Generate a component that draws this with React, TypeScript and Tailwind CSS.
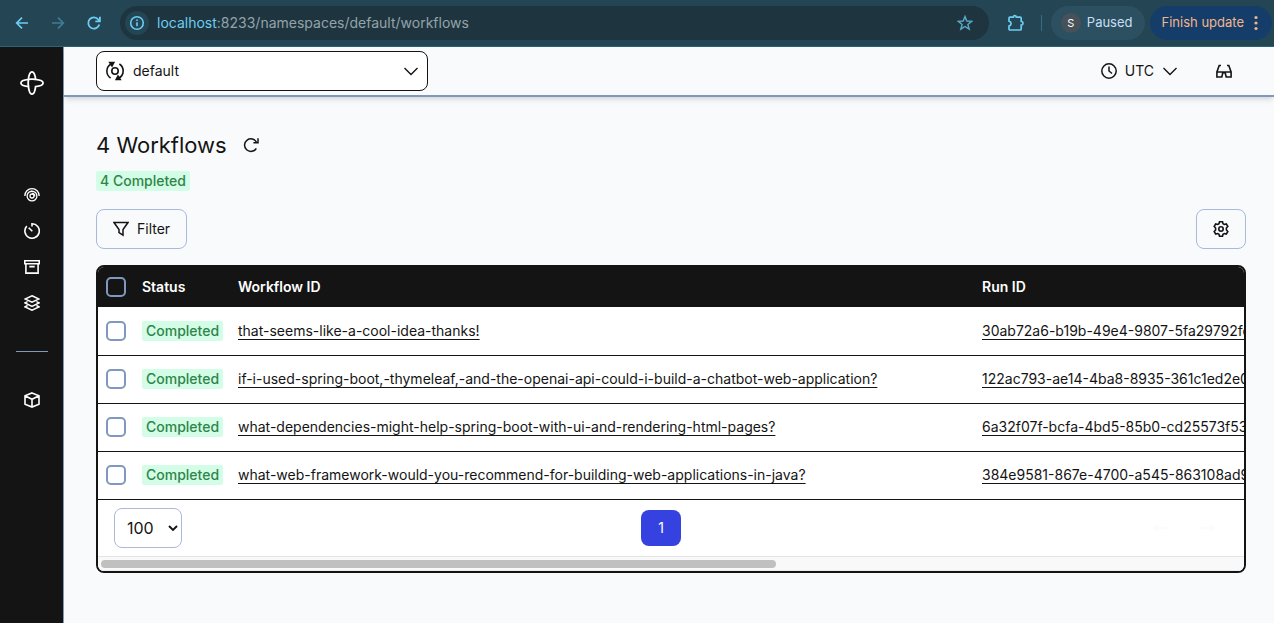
import type { ReactNode } from "react";

const workflows = [
  { id: "that-seems-like-a-cool-idea-thanks!", run: "30ab72a6-b19b-49e4-9807-5fa29792fc41" },
  {
    id: "if-i-used-spring-boot,-thymeleaf,-and-the-openai-api-could-i-build-a-chatbot-web-application?",
    run: "122ac793-ae14-4ba8-8935-361c1ed2e07b",
  },
  {
    id: "what-dependencies-might-help-spring-boot-with-ui-and-rendering-html-pages?",
    run: "6a32f07f-bcfa-4bd5-85b0-cd25573f53a2",
  },
  {
    id: "what-web-framework-would-you-recommend-for-building-web-applications-in-java?",
    run: "384e9581-867e-4700-a545-863108ad9e16",
  },
];

type IconProps = { className?: string; box?: string; width?: number; children: ReactNode };

function Icon({ className = "size-4", box = "0 0 16 16", width = 1.3, children }: IconProps) {
  return (
    <svg className={className} viewBox={box} fill="none" stroke="currentColor" strokeWidth={width} aria-hidden="true">
      {children}
    </svg>
  );
}

function ChevronDown() {
  return (
    <Icon className="size-4" width={1.4}>
      <path d="M1.500 5 8 11.500 14.500 5" />
    </Icon>
  );
}

function BrowserBar() {
  return (
    <div className="flex h-[47px] shrink-0 items-center border-b border-[#2f6273] bg-[#234554] pr-[2px] pl-[14px] text-[#6ccdf2]">
      <div className="flex items-center gap-5">
        <button aria-label="Back">
          <Icon width={1.7}>
            <path d="M14 8H3M8 2.700 2.700 8 8 13.300" />
          </Icon>
        </button>
        <button aria-label="Forward" className="text-[#417c93]">
          <Icon width={1.7}>
            <path d="M2 8h11M8 2.700 13.300 8 8 13.300" />
          </Icon>
        </button>
        <button aria-label="Reload">
          <Icon width={1.8}>
            <path d="M13.300 9.400A5.600 5.600 0 1 1 12.300 4.500L13.600 6M13.900 1.700V6.300H9.300" />
          </Icon>
        </button>
      </div>
      <div className="ml-[18px] flex h-[34px] flex-1 items-center rounded-full bg-[#1e353f] pr-4 pl-[5px]">
        <button aria-label="Site information" className="flex size-6 items-center justify-center rounded-full bg-[#234554]">
          <Icon width={1.6}>
            <circle cx="8" cy="8" r="6.300" />
            <path d="M8 7.200v4M8 4.500v1.500" />
          </Icon>
        </button>
        <div className="ml-2 flex-1 text-sm text-[#94a3aa]">
          <span className="text-[#6ccdf2]">localhost</span>:8233/namespaces/default/workflows
        </div>
        <button aria-label="Bookmark this page" className="text-[#5aa9c9]">
          <Icon width={1.4}>
            <path d="m8 1.500 1.800 4.500 4.900.3-3.800 3.100 1.300 4.800L8 11.500l-4.200 2.700 1.300-4.800L1.300 6.300l4.900-.3Z" />
          </Icon>
        </button>
      </div>
      <button aria-label="Extensions" className="ml-[18px]">
        <Icon className="size-[18px]" box="0 0 18 18" width={1.7}>
          <path d="M3 3.200H6.300C6.500 1.200 9.100 1.200 9.300 3.200H13.200Q14.200 3.200 14.200 4.200V7.400C16.600 7.600 16.600 10.800 14.200 11V15Q14.200 16 13.200 16H3Q2 16 2 15V12C4.800 11.200 4.800 7.900 2 7.100V4.200Q2 3.200 3 3.200Z" />
        </Icon>
      </button>
      <div className="ml-4 h-4 w-px bg-[#3a6c7e]" />
      <button className="ml-[9px] flex h-[34px] items-center gap-[6px] rounded-full bg-[#2c505f] pr-3 pl-[10px] text-[13px] text-[#c8def8]">
        <span className="flex size-5 items-center justify-center rounded-full bg-[#46515a] text-[11px] text-white">S</span>
        Paused
      </button>
      <button className="ml-[5px] flex h-[34px] items-center gap-[6px] rounded-full bg-[#143d69] pr-3 pl-3 text-[13px] text-[#f3b58c]">
        Finish update
        <svg className="h-4 w-[10px]" viewBox="0 0 10 16" fill="currentColor" aria-hidden="true">
          <circle cx="6" cy="2.500" r="1.600" />
          <circle cx="6" cy="8" r="1.600" />
          <circle cx="6" cy="13.500" r="1.600" />
        </svg>
      </button>
    </div>
  );
}

function Sidebar() {
  return (
    <nav className="flex w-16 shrink-0 flex-col items-center border-r border-[#8098c0] bg-[#141414] pt-6 text-white">
      <a href="#" aria-label="Home">
        <Icon className="size-6" box="0 0 24 24" width={1.8}>
          <path d="M8.400 8.400C8.900 4 10.100.9 12 .9s3.100 3.100 3.600 7.500c4.400.5 7.500 1.700 7.500 3.600s-3.100 3.100-7.500 3.600c-.5 4.400-1.700 7.500-3.600 7.500s-3.100-3.100-3.600-7.500C4 15.100.9 13.900.9 12s3.100-3.100 7.500-3.600Z" />
          <path d="M8.400 8.400c2.300-.3 4.900-.3 7.200 0M8.400 8.400c-.3 2.300-.3 4.900 0 7.200" />
        </Icon>
      </a>
      <div className="mt-[92px] flex flex-col gap-5">
        <a href="#workflows" aria-label="Workflows">
          <Icon width={1.3}>
            <path d="M.8 9C.8 4.700 4 1.700 8 1.700s7.200 3 7.200 7.300" />
            <path d="M8 4.100a4.900 4.900 0 1 0 4.900 4.900M5 5.200C8.500 3 12.900 5 12.900 9M8 6.600c1.700-.5 3 .9 2.700 2.700" />
            <circle cx="8" cy="9" r="2" />
          </Icon>
        </a>
        <a href="#schedules" aria-label="Schedules">
          <Icon width={1.6}>
            <path d="M8 3.600V.8a7.200 7.200 0 1 1-5.200 2.300M4.700 4.700 8.300 8.300" />
          </Icon>
        </a>
        <a href="#archive" aria-label="Archive">
          <Icon width={1.6}>
            <path d="M.8 1.700h14.400v3.100H.8ZM1.900 4.800v9.300h12.200V4.800M5.300 7.600h5.400" />
          </Icon>
        </a>
        <a href="#batch" aria-label="Batch">
          <Icon width={1.5}>
            <path d="m8 .8 7 3.200-7 3.200L1 4ZM3.600 6.600 1 7.900l7 3.400 7-3.400-2.600-1.300M3.600 10.500 1 11.800l7 3.400 7-3.400-2.600-1.300" />
          </Icon>
        </a>
      </div>
      <hr className="mt-10 w-8 border-[#8098c0]" />
      <a href="#import" aria-label="Import" className="mt-10">
        <Icon width={1.6}>
          <path d="m8 .9 7 2.900v8.400l-7 2.900-7-2.900V3.800ZM1 3.800l7 3.500 7-3.500M8 7.300v7.800" />
        </Icon>
      </a>
    </nav>
  );
}

function TopNav() {
  return (
    <header className="flex h-[50px] shrink-0 items-center justify-between border-b-2 border-[#8098c0] bg-[#f8fafc] pr-10 pl-8 text-sm shadow-md">
      <button className="flex h-10 w-[332px] items-center rounded-lg border border-[#141414] bg-white px-2">
        <Icon className="size-5" box="0 0 20 20" width={1.6}>
          <circle cx="10" cy="10" r="3.200" />
          <path d="M6 3A8.200 8.200 0 0 0 5.600 17M14 17A8.200 8.200 0 0 0 14.400 3" />
          <path d="M4.800 1.500 8.800 1.600 7 5ZM15.200 18.500 11.200 18.400 13 15Z" fill="currentColor" />
        </Icon>
        <span className="ml-2 flex-1 text-left">default</span>
        <ChevronDown />
      </button>
      <div className="flex items-center gap-9">
        <button className="flex items-center gap-2">
          <Icon width={1.5}>
            <circle cx="8" cy="8" r="7.200" />
            <path d="M8 3.500V8l3 2.500" />
          </Icon>
          UTC
          <ChevronDown />
        </button>
        <button aria-label="Labs mode" className="p-0.5">
          <Icon width={1.6}>
            <path d="M5 2.500H3.200L.9 9v5h4.900L7 9H.9M11 2.500h1.800L15.100 9v5h-4.900L9 9h6.100M6.500 9.800h3" />
          </Icon>
        </button>
      </div>
    </header>
  );
}

function Check({ label }: { label: string }) {
  return (
    <input
      type="checkbox"
      aria-label={label}
      className="block size-5 appearance-none rounded-[5px] border-2 border-[#8098c0] checked:bg-[#3642df]"
    />
  );
}

function Badge({ children }: { children: ReactNode }) {
  return (
    <span className="inline-block h-5 rounded-xs bg-[#d3fde6] px-1 text-sm leading-5 font-medium text-[#2f8548]">
      {children}
    </span>
  );
}

function WorkflowTable() {
  return (
    <section className="mt-4 overflow-hidden rounded-lg border-2 border-[#141414] bg-white">
      <div className="overflow-x-auto [scrollbar-width:none]">
        <table className="w-full min-w-[1200px] table-fixed border-separate border-spacing-0 text-left text-sm">
          <thead>
            <tr className="h-10 bg-[#141414] text-white">
              <th className="w-9 p-0 pl-2">
                <Check label="Select all workflows" />
              </th>
              <th className="w-24 px-2 py-0 font-semibold">Status</th>
              <th className="w-[744px] px-2 py-0 font-semibold">Workflow ID</th>
              <th className="px-2 py-0 font-semibold">Run ID</th>
            </tr>
          </thead>
          <tbody className="[&>tr:not(:first-child)>td]:border-y [&>tr>td]:border-t-[#141414] [&>tr>td]:border-b-transparent">
            {workflows.map((w) => (
              <tr key={w.run} className="h-12">
                <td className="p-0 pl-2">
                  <Check label={`Select ${w.id}`} />
                </td>
                <td className="px-2 py-0">
                  <Badge>Completed</Badge>
                </td>
                <td className="px-2 py-0 whitespace-nowrap">
                  <a href="#workflow" className="underline underline-offset-3">
                    {w.id}
                  </a>
                </td>
                <td className="px-2 py-0 whitespace-nowrap">
                  <a href="#run" className="underline underline-offset-3">
                    {w.run}
                  </a>
                </td>
              </tr>
            ))}
          </tbody>
        </table>
      </div>
      <div className="flex h-[57px] items-center justify-between border-t border-[#141414] px-4">
        <div className="relative flex items-center">
          <select
            aria-label="Rows per page"
            className="h-10 w-[68px] appearance-none rounded-lg border border-[#a9b9dc] bg-white pl-3 text-base"
          >
            <option>100</option>
            <option>250</option>
            <option>500</option>
          </select>
          <Icon className="pointer-events-none absolute right-1 size-[10px]" box="0 0 10 10" width={1.9}>
            <path d="M1 3l4 4 4-4" />
          </Icon>
        </div>
        <button className="h-9 w-10 rounded-lg bg-[#3642df] text-sm text-white">1</button>
        <div className="flex gap-2 text-[#fafafa]">
          <button aria-label="Previous page" disabled className="flex size-10 items-center justify-center">
            <Icon>
              <path d="M15 8H2M6 4 2 8l4 4" />
            </Icon>
          </button>
          <button aria-label="Next page" disabled className="flex size-10 items-center justify-center">
            <Icon>
              <path d="M1 8h13M10 4l4 4-4 4" />
            </Icon>
          </button>
        </div>
      </div>
      <div className="h-[15px] border-y border-t-[#e4e4e4] border-b-[#ededed] bg-[#f9f9f9] px-[3px] pt-[3px]">
        <div className="h-2 w-[59.2%] rounded-full bg-[#c0c0c0]" />
      </div>
    </section>
  );
}

export default function App() {
  return (
    <div className="flex min-h-screen flex-col bg-[#f8fafc] font-['Inter','Liberation_Sans',sans-serif] text-[#141414]">
      <BrowserBar />
      <div className="flex flex-1">
        <Sidebar />
        <div className="flex min-w-0 flex-1 flex-col">
          <TopNav />
          <main className="pt-8 pr-7 pb-8 pl-8">
            <div className="flex items-center gap-4">
              <h1 className="text-[22px] leading-8">4 Workflows</h1>
              <button aria-label="Refresh">
                <Icon width={1.5}>
                  <path d="M13.300 11.300A6.300 6.300 0 1 1 13.600 5.500M15 1.200V5.800H10.400" />
                </Icon>
              </button>
            </div>
            <div className="mt-[10px] flex">
              <Badge>4 Completed</Badge>
            </div>
            <div className="mt-[18px] flex items-center justify-between">
              <button className="flex h-10 items-center gap-2 rounded-lg border border-[#a9b9dc] px-4 text-sm">
                <Icon width={1.5}>
                  <path d="M1 1.500h14L10 8.500v5.700L6 11.500v-3Z" />
                </Icon>
                Filter
              </button>
              <button
                aria-label="Configure columns"
                className="flex h-10 w-[50px] items-center justify-center rounded-lg border border-[#a9b9dc]"
              >
                <Icon width={1.6}>
                  <circle cx="8" cy="8" r="2.200" />
                  <path d="M6.500.8h3l.5 2 1.300.7 2-.6 1.500 2.600L13.400 7v2l1.400 1.500-1.500 2.600-2-.6-1.300.7-.5 2h-3l-.5-2-1.300-.7-2 .6-1.500-2.600L2.600 9V7L1.200 5.500l1.500-2.600 2 .6L6 2.800Z" />
                </Icon>
              </button>
            </div>
            <WorkflowTable />
          </main>
        </div>
      </div>
    </div>
  );
}
